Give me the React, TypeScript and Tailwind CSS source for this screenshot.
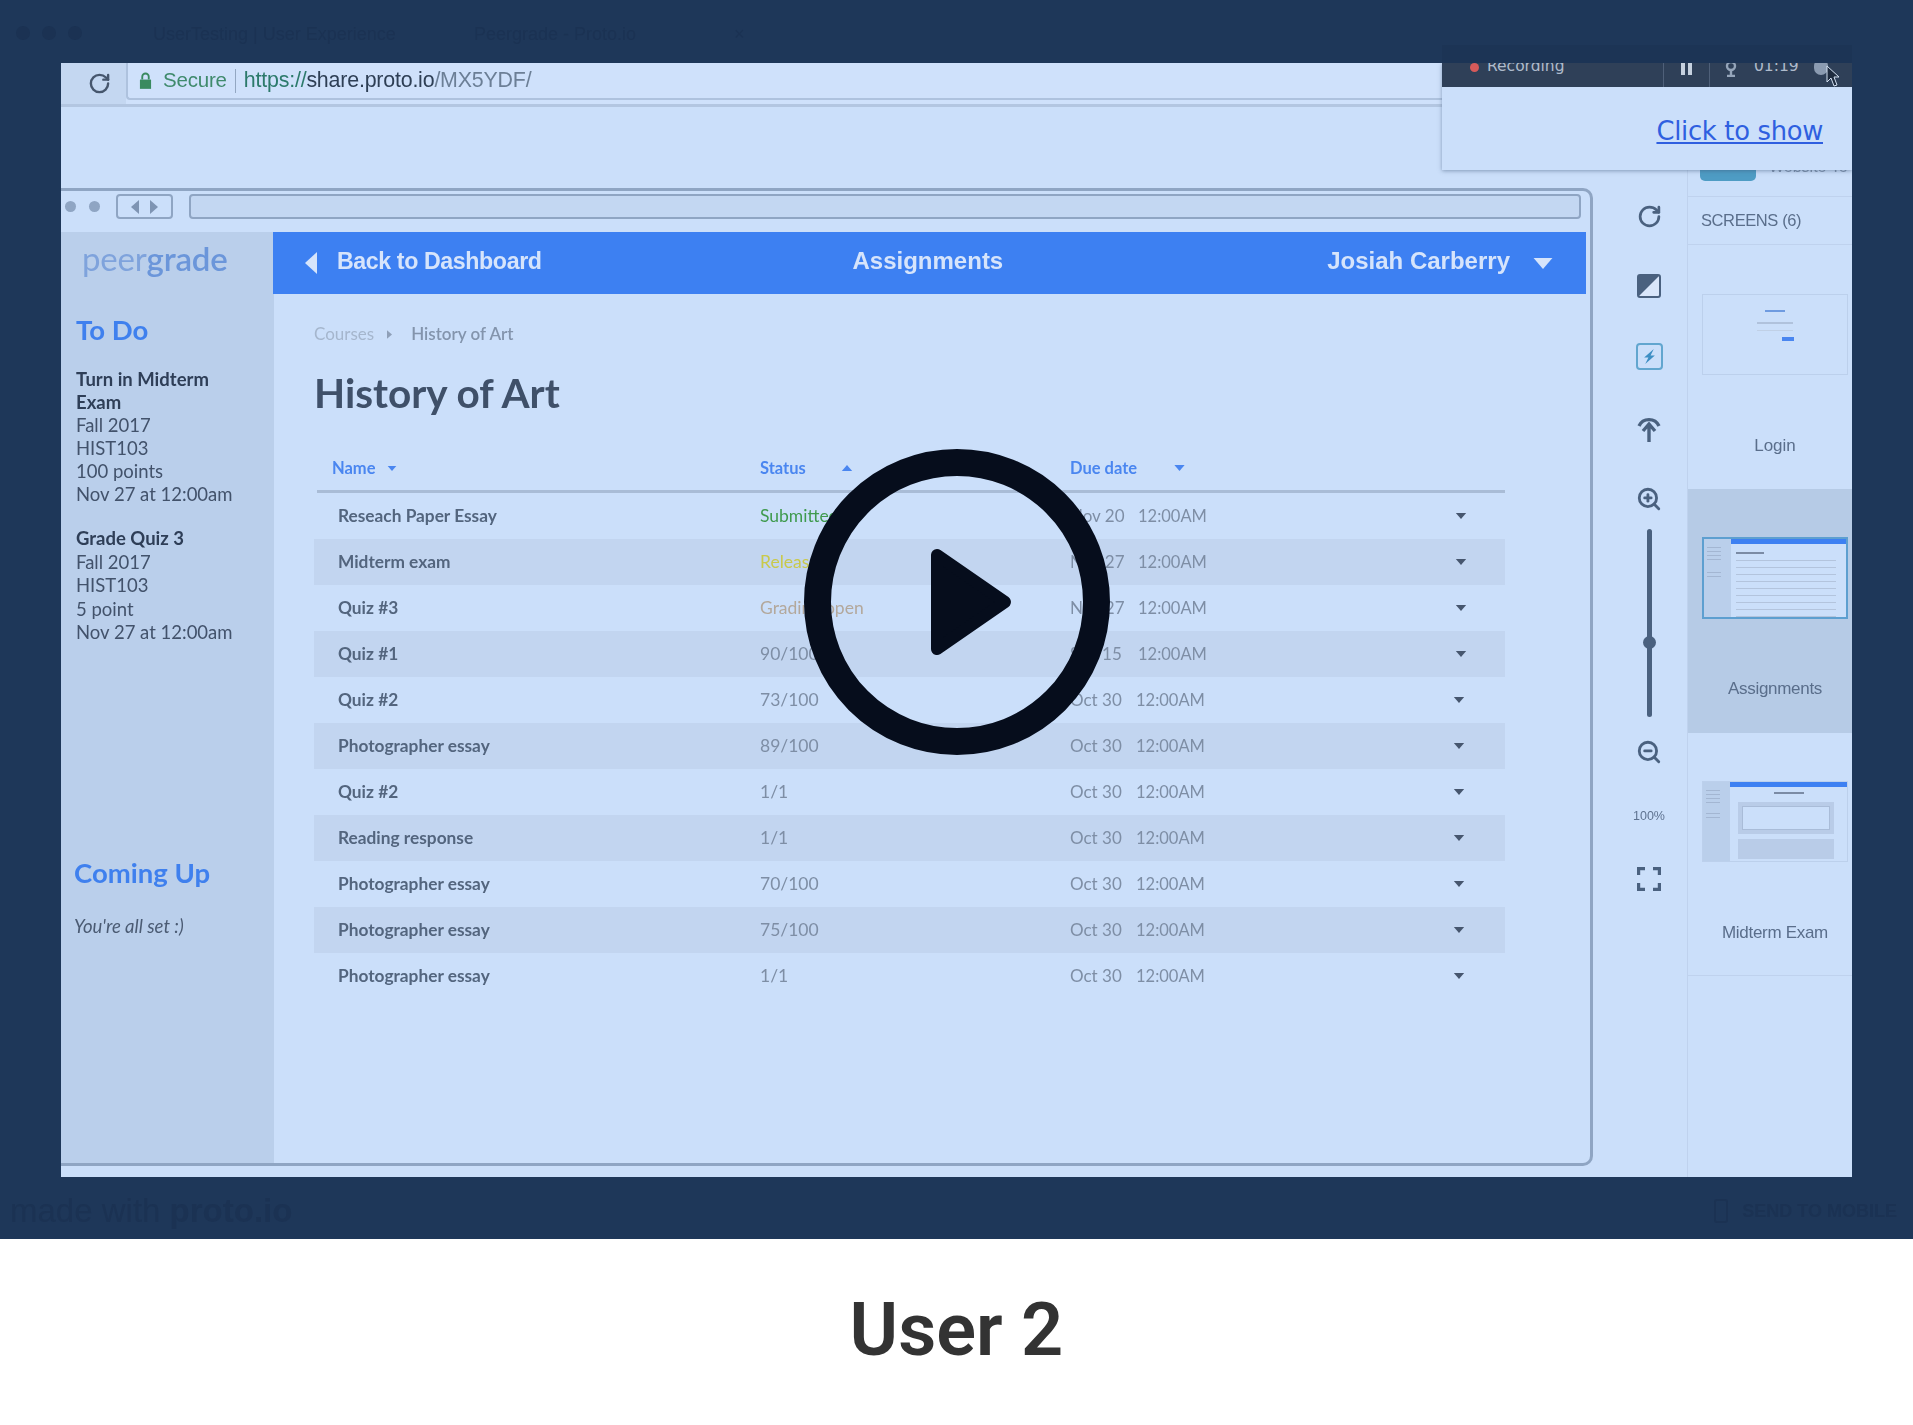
import { RotateCw, ZoomIn, ZoomOut } from "lucide-react";

const rows = [
  ["Reseach Paper Essay", "Submitted", "Nov 20", "text-[#3f9a4e]", "ml-[2px]"],
  ["Midterm exam", "Released", "Nov 27", "text-[#c9c94a]", "ml-[2px]"],
  ["Quiz #3", "Grading open", "Nov 27", "text-[#b3a89c]", "ml-[2px]"],
  ["Quiz #1", "90/100", "Sep 15", "text-[#7e8ea5]", "ml-[2px]"],
  ["Quiz #2", "73/100", "Oct 30", "text-[#7e8ea5]", ""],
  ["Photographer essay", "89/100", "Oct 30", "text-[#7e8ea5]", ""],
  ["Quiz #2", "1/1", "Oct 30", "text-[#7e8ea5]", ""],
  ["Reading response", "1/1", "Oct 30", "text-[#7e8ea5]", ""],
  ["Photographer essay", "70/100", "Oct 30", "text-[#7e8ea5]", ""],
  ["Photographer essay", "75/100", "Oct 30", "text-[#7e8ea5]", ""],
  ["Photographer essay", "1/1", "Oct 30", "text-[#7e8ea5]", ""],
];

function Caret({ up, className }: { up?: boolean; className?: string }) {
  return (
    <svg viewBox="0 0 12 7" className={className} fill="currentColor">
      <path d={up ? "M0 7 L6 0 L12 7 Z" : "M0 0 L12 0 L6 7 Z"} />
    </svg>
  );
}

function Frame() {
  return (
    <div className="mt-[81px] mb-[11px] flex-1 flex flex-col border-t-[3px] border-r-[3px] border-b-[3px] border-[#8fa5c3] rounded-r-[10px] overflow-hidden">
      <div className="h-[41px] flex items-start pt-[3px] shrink-0">
        <div className="w-[55px] h-[25px] flex items-center gap-[13px] pl-[4px]">
          <span className="w-[11px] h-[11px] rounded-full bg-[#8fa5c3]" />
          <span className="w-[11px] h-[11px] rounded-full bg-[#8fa5c3]" />
        </div>
        <div className="w-[57px] h-[25px] border-2 border-[#8fa5c3] rounded-[4px] flex items-center justify-center gap-[11px]">
          <svg viewBox="0 0 8 14" className="w-[8px] h-[14px]" fill="#7e94b3"><path d="M8 0 L0 7 L8 14 Z" /></svg>
          <svg viewBox="0 0 8 14" className="w-[8px] h-[14px]" fill="#7e94b3"><path d="M0 0 L8 7 L0 14 Z" /></svg>
        </div>
        <div className="ml-[16px] w-[1392px] h-[25px] border-2 border-[#8fa5c3] rounded-[4px] bg-[#c3d7f2]" />
      </div>
      <div className="flex-1 flex">
        <aside className="w-[213px] bg-[#bacfeb] pl-[15px] shrink-0 font-['Lato',sans-serif] text-[18.5px] leading-[23px] text-[#42526b]">
          <div className="h-[53px] flex items-center pl-[6px] text-[33px] leading-none tracking-[-0.2px]">
            <span className="text-[#7fa3dc]">peer</span>
            <span className="text-[#6b96da] font-semibold">grade</span>
          </div>
          <h3 className="mt-[27px] h-[36px] leading-[36px] text-[27.5px] font-bold text-[#3f80ee]">To Do</h3>
          <div className="mt-[20px]">
            <p className="font-bold text-[#2e3e57] w-[150px]">Turn in Midterm Exam</p>
            <p>Fall 2017</p>
            <p>HIST103</p>
            <p>100 points</p>
            <p>Nov 27 at 12:00am</p>
          </div>
          <div className="mt-[21px] leading-[23.5px]">
            <p className="font-bold text-[#2e3e57]">Grade Quiz 3</p>
            <p>Fall 2017</p>
            <p>HIST103</p>
            <p>5 point</p>
            <p>Nov 27 at 12:00am</p>
          </div>
          <h3 className="mt-[210px] -ml-[2px] h-[36px] leading-[36px] text-[27.5px] font-bold text-[#3f80ee]">Coming Up</h3>
          <p className="mt-[24px] -ml-[2px] italic text-[#4b5b73]">You're all set :)</p>
        </aside>
        <main className="flex-1 flex flex-col font-['Lato',sans-serif]">
          <header className="h-[62px] -ml-[1px] mr-[4px] pb-[4px] bg-[#3d80f2] text-[#d6e4fb] font-['Liberation_Sans',sans-serif] flex items-center relative shrink-0">
            <svg viewBox="0 0 12 22" className="w-[12px] h-[22px] ml-[32px] mt-[4px]" fill="#d6e4fb"><path d="M12 0 L0 11 L12 22 Z" /></svg>
            <span className="ml-[20px] text-[23.2px] tracking-[-0.4px] font-semibold">Back to Dashboard</span>
            <span className="ml-[311px] text-[24px] font-bold">Assignments</span>
            <span className="ml-auto mr-[76px] text-[24px] font-bold">Josiah Carberry</span>
            <Caret className="absolute right-[32px] top-[26px] w-[22px] h-[11px] text-[#d6e4fb]" />
          </header>
          <div className="mt-[28px] ml-[40px] h-[24px] flex items-center text-[17px]">
            <span className="text-[#a5b6cd]">Courses</span>
            <svg viewBox="0 0 6 10" className="w-[5px] h-[9px] ml-[13px] mr-[19px]" fill="#8fa0b8"><path d="M0 0 L6 5 L0 10 Z" /></svg>
            <span className="text-[#8394ac] font-semibold">History of Art</span>
          </div>
          <h1 className="mt-[19px] ml-[40px] h-[56px] leading-[56px] text-[40.5px] font-bold text-[#3f5069]">History of Art</h1>
          <div className="mt-[22px] ml-[40px] w-[1191px]">
            <div className="ml-[3px] h-[50px] pt-[3px] border-b-[3px] border-[#a9bcd6] flex items-center text-[16.5px] font-bold text-[#4a86f0]">
              <span className="w-[443px] pl-[15px] flex items-center gap-[11px]">Name <Caret className="w-[10px] h-[5px]" /></span>
              <span className="w-[310px] flex items-center">Status <Caret up className="ml-[35px] w-[12px] h-[6px]" /></span>
              <span className="flex items-center">Due date <Caret className="ml-[36px] w-[13px] h-[6px]" /></span>
            </div>
            {rows.map((r, i) => (
              <div key={i} className={`h-[46px] flex items-center text-[17.5px] ${i % 2 === 1 ? "bg-[#c2d5f0]" : ""}`}>
                <span className="w-[446px] pl-[24px] font-bold text-[#53657e] text-[17.3px]">{r[0]}</span>
                <span className={`w-[310px] ${r[3]}`}>{r[1]}</span>
                <span className="w-[66px] text-[#7e8ea5] text-[17px]">{r[2]}</span>
                <span className={`w-[316px] text-[#7e8ea5] text-[16.5px] ${r[4]}`}>12:00AM</span>
                <Caret className="w-[14px] h-[6px] text-[#46566e]" />
              </div>
            ))}
          </div>
        </main>
      </div>
    </div>
  );
}

function Rail() {
  return (
    <div className="w-[94px] shrink-0 pl-[18px] pt-[97px] flex flex-col items-center text-[#4a617f]">
      <RotateCw className="w-[25px] h-[25px]" strokeWidth={2.6} />
      <svg viewBox="0 0 24 24" className="w-[24px] h-[24px] mt-[45px]">
        <rect x="1" y="1" width="22" height="22" rx="2" fill="#d9e6fa" stroke="#4a617f" strokeWidth="2" />
        <path d="M1 1 H23 L1 23 Z" fill="#4a617f" />
      </svg>
      <div className="mt-[45px] w-[27px] h-[27px] rounded-[4px] border-2 border-[#62a6cf] flex items-center justify-center">
        <svg viewBox="0 0 14 14" className="w-[15px] h-[15px]" fill="#3e8fc4"><path d="M11 0 L2 8 L6 8 L3 14 L12 6 L8 6 Z" /></svg>
      </div>
      <svg viewBox="0 0 24 30" className="w-[24px] h-[30px] mt-[43px]" fill="none" stroke="#4a617f" strokeWidth="3.4">
        <path d="M2 13 A11 11 0 0 1 22 13" />
        <path d="M12 29 V13 M6 18 L12 11 L18 18" />
      </svg>
      <ZoomIn className="w-[26px] h-[26px] mt-[43px]" strokeWidth={2.6} />
      <div className="relative mt-[17px] w-[5px] h-[188px] rounded-full bg-[#4a617f]">
        <span className="absolute -left-[4px] top-[107px] w-[13px] h-[13px] rounded-full bg-[#4a617f]" />
      </div>
      <ZoomOut className="w-[26px] h-[26px] mt-[22px]" strokeWidth={2.6} />
      <span className="mt-[43px] h-[16px] leading-[16px] text-[12.5px] text-[#5f7390] font-['Liberation_Sans',sans-serif]">100%</span>
      <svg viewBox="0 0 24 24" className="w-[24px] h-[24px] mt-[43px]" fill="none" stroke="#4a617f" strokeWidth="3.4">
        <path d="M1.5 8 V1.5 H8 M16 1.5 H22.5 V8 M1.5 16 V22.5 H8 M16 22.5 H22.5 V16" />
      </svg>
    </div>
  );
}

function MiniLines({ n, w }: { n: number; w: string }) {
  return (
    <div className="flex flex-col gap-[3px]">
      {Array.from({ length: n }).map((_, i) => (
        <div key={i} className={`h-[1px] bg-[#a3b6d2] ${w}`} />
      ))}
    </div>
  );
}

function Screens() {
  return (
    <div className="flex-1 border-l border-[#bfd2ee] font-['Liberation_Sans',sans-serif] text-[#5a6e8b] flex flex-col">
      <div className="h-[90px] border-b border-[#bfd2ee] shrink-0 pl-[12px] pt-[50px] flex items-start overflow-hidden">
        <div className="w-[56px] h-[24px] rounded-b-[5px] bg-[#4e9cc4] shrink-0" />
        <span className="ml-[13px] mt-[1px] text-[16px] leading-[18px] whitespace-nowrap text-[#7f92ad]">Website Te</span>
      </div>
      <div className="h-[48px] border-b border-[#bfd2ee] flex items-center pl-[13px] text-[16.5px] tracking-[-0.4px] shrink-0">SCREENS (6)</div>
      <div className="h-[244px] pt-[49px] pl-[14px] shrink-0">
        <div className="w-[146px] h-[81px] border border-[#bcd0ec] flex flex-col items-center pt-[15px]">
          <div className="w-[20px] h-[2px] bg-[#6f9be0] blur-[0.5px]" />
          <div className="mt-[10px] w-[36px] h-[2px] bg-[#b0c2dc] blur-[0.5px]" />
          <div className="mt-[6px] w-[36px] h-[1px] bg-[#c0d0e6]" />
          <div className="mt-[6px] ml-[26px] w-[12px] h-[4px] bg-[#4a86f0] blur-[0.5px]" />
        </div>
        <p className="mt-[58px] text-center w-[146px] text-[17px]">Login</p>
      </div>
      <div className="h-[244px] pt-[48px] pl-[14px] bg-[#b6cbe6] shrink-0">
        <div className="w-[146px] h-[82px] border-2 border-[#5d9fd0] bg-[#cbdffa] flex overflow-hidden">
          <div className="w-[27px] bg-[#bacfeb] pl-[3px] pt-[8px] flex flex-col gap-[12px] blur-[0.6px]">
            <MiniLines n={4} w="w-[14px]" />
            <MiniLines n={2} w="w-[14px]" />
          </div>
          <div className="flex-1">
            <div className="h-[5px] bg-[#3d80f2]" />
            <div className="ml-[5px] mt-[8px] w-[28px] h-[2px] bg-[#7b8ba5] blur-[0.5px]" />
            <div className="ml-[5px] mt-[6px] flex flex-col gap-[6px] blur-[0.6px]">
              {Array.from({ length: 9 }).map((_, i) => (
                <div key={i} className="h-[1px] w-[100px] bg-[#b3c4dd]" />
              ))}
            </div>
          </div>
        </div>
        <p className="mt-[57px] text-center w-[146px] text-[17px] tracking-[-0.3px]">Assignments</p>
      </div>
      <div className="h-[243px] pt-[48px] pl-[14px] border-b border-[#bfd2ee] shrink-0">
        <div className="w-[146px] h-[81px] border border-[#bcd0ec] flex overflow-hidden">
          <div className="w-[27px] bg-[#bacfeb] pl-[3px] pt-[8px] flex flex-col gap-[10px] blur-[0.6px]">
            <MiniLines n={4} w="w-[14px]" />
            <MiniLines n={2} w="w-[14px]" />
          </div>
          <div className="flex-1">
            <div className="h-[5px] bg-[#3d80f2]" />
            <div className="mx-auto mt-[5px] w-[30px] h-[2px] bg-[#7b8ba5] blur-[0.5px]" />
            <div className="ml-[8px] mt-[8px] w-[96px] h-[32px] bg-[#b9cce8] p-[4px]">
              <div className="w-full h-full border border-[#a9bcd8] bg-[#cbdffa]" />
            </div>
            <div className="ml-[8px] mt-[5px] w-[96px] h-[20px] bg-[#b9cce8]" />
          </div>
        </div>
        <p className="mt-[58px] text-center w-[146px] text-[17px] tracking-[-0.3px]">Midterm Exam</p>
      </div>
    </div>
  );
}

function Recorder() {
  return (
    <div className="absolute top-0 right-0 w-[410px] h-[107px] bg-[#cbdffa] shadow-[0_1px_4px_rgba(60,85,120,0.5)] flex flex-col items-end font-['DejaVu_Sans',sans-serif]">
      <div className="w-full h-[24px] bg-[#2f4058] text-[#aebbcc] relative overflow-hidden shrink-0 flex items-start text-[15.5px] leading-[16px]">
        <span className="ml-[28px] w-[9px] h-[9px] rounded-full bg-[#d65a5a]" />
        <span className="ml-[8px] -mt-[5px]">Recording</span>
        <span className="absolute left-[221px] top-0 h-full w-px bg-[#4f6079]" />
        <span className="absolute left-[267px] top-0 h-full w-px bg-[#4f6079]" />
        <span className="absolute left-[239px] top-0 w-[4px] h-[12px] bg-[#c6d1df]" />
        <span className="absolute left-[246px] top-0 w-[4px] h-[12px] bg-[#c6d1df]" />
        <svg viewBox="0 0 14 14" className="absolute left-[282px] top-0 w-[14px] h-[14px]" fill="none" stroke="#95a5ba" strokeWidth="2.4">
          <circle cx="7" cy="3" r="4" />
          <path d="M7 8 V12 M3 13 H11" />
        </svg>
        <span className="absolute left-[312px] -top-[5px]">01:19</span>
        <span className="absolute left-[372px] -top-[4px] w-[14px] h-[16px] rounded-full bg-[#8b9bb1]" />
      </div>
      <a className="mt-[28px] mr-[29px] text-[25.8px] leading-[32px] text-[#2f5fe0] underline tracking-[-0.3px]">Click to show</a>
      <svg viewBox="0 0 14 22" className="absolute left-[384px] top-[2px] w-[14px] h-[22px]">
        <path d="M1 1 V17 L5 13 L8 21 L11 20 L8 12 L13 12 Z" fill="#1f2c3f" stroke="#d5e2f3" strokeWidth="1" />
      </svg>
    </div>
  );
}

export default function App() {
  return (
    <div className="w-full min-h-screen bg-white">
      <section className="relative h-[1239px] bg-[#1e3759] flex flex-col overflow-hidden font-['Liberation_Sans',sans-serif]">
        <div className="h-[63px] shrink-0 relative flex items-start pt-[24px] pl-[16px] text-[18px] leading-[20px] text-[#1b3253] blur-[0.7px]">
          <div className="w-[137px] flex gap-[12px] pt-[2px]">
            <span className="w-[14px] h-[14px] rounded-full bg-[#1b3253]" />
            <span className="w-[14px] h-[14px] rounded-full bg-[#1b3253]" />
            <span className="w-[14px] h-[14px] rounded-full bg-[#1b3253]" />
          </div>
          <span className="w-[321px]">UserTesting | User Experience</span>
          <span className="w-[260px]">Peergrade - Proto.io</span>
          <span>×</span>
          <div className="absolute right-[61px] top-[45px] w-[410px] h-[18px] bg-[#1c3455]" />
        </div>
        <div className="mx-[61px] h-[1114px] shrink-0 bg-[#cbdffa] overflow-hidden relative flex flex-col">
          <div className="flex flex-col flex-1 blur-[0.5px]">
            <div className="h-[44px] shrink-0 flex border-b-[3px] border-[#b3c6e1] bg-[#cfe1fb]">
              <div className="w-[65px] bg-[#c4d7f1] flex items-center justify-end pr-[15px] shrink-0 text-[#46566d]">
                <RotateCw className="w-[23px] h-[23px]" strokeWidth={2.5} />
              </div>
              <div className="flex-1 h-[37px] border-b-[2px] border-l-[2px] border-[#aec2de] rounded-bl-[4px] flex items-center pl-[11px] text-[21.4px] tracking-[-0.2px]">
                <svg viewBox="0 0 14 18" className="w-[13px] h-[17px]" fill="#3a8a5f">
                  <path d="M1 8 H13 V18 H1 Z" />
                  <path d="M3.5 8 V5 A3.5 3.5 0 0 1 10.5 5 V8" fill="none" stroke="#3a8a5f" strokeWidth="2" />
                </svg>
                <span className="ml-[11px] text-[#3f8a6c] text-[20.5px]">Secure</span>
                <span className="mx-[8px] w-[1px] h-[24px] bg-[#93a7c2]" />
                <span className="text-[#2c7a6b]">https://</span>
                <span className="text-[#2e3f55]">share.proto.io</span>
                <span className="text-[#6c7f96]">/MX5YDF/</span>
              </div>
            </div>
            <div className="flex-1 flex min-h-0">
              <div className="w-[1532px] shrink-0 flex flex-col"><Frame /></div>
              <Rail />
              <Screens />
            </div>
          </div>
          <Recorder />
        </div>
        <div className="flex-1 flex items-center justify-between pl-[10px] pt-[6px] text-[#1b3253] blur-[0.7px]">
          <span className="text-[33px]">made with <b>proto.io</b></span>
          <span className="flex items-center gap-[14px] text-[18px] font-bold whitespace-nowrap pr-[16px]">
            <span className="w-[14px] h-[24px] rounded-[3px] border-2 border-[#1b3253]" />
            SEND TO MOBILE
          </span>
        </div>
        <svg viewBox="0 0 306 306" className="absolute left-[804px] top-[449px] w-[306px] h-[306px]">
          <circle cx="153" cy="153" r="139.5" fill="none" stroke="#060d1c" strokeWidth="27" />
          <path d="M133 106 L201 153 L133 200 Z" fill="#060d1c" stroke="#060d1c" strokeWidth="12" strokeLinejoin="round" />
        </svg>
      </section>
      <div className="h-[186px] pb-[4px] flex items-center justify-center">
        <h2 className="font-['Roboto',sans-serif] font-semibold text-[74px] leading-none text-[#333333]">User 2</h2>
      </div>
    </div>
  );
}
